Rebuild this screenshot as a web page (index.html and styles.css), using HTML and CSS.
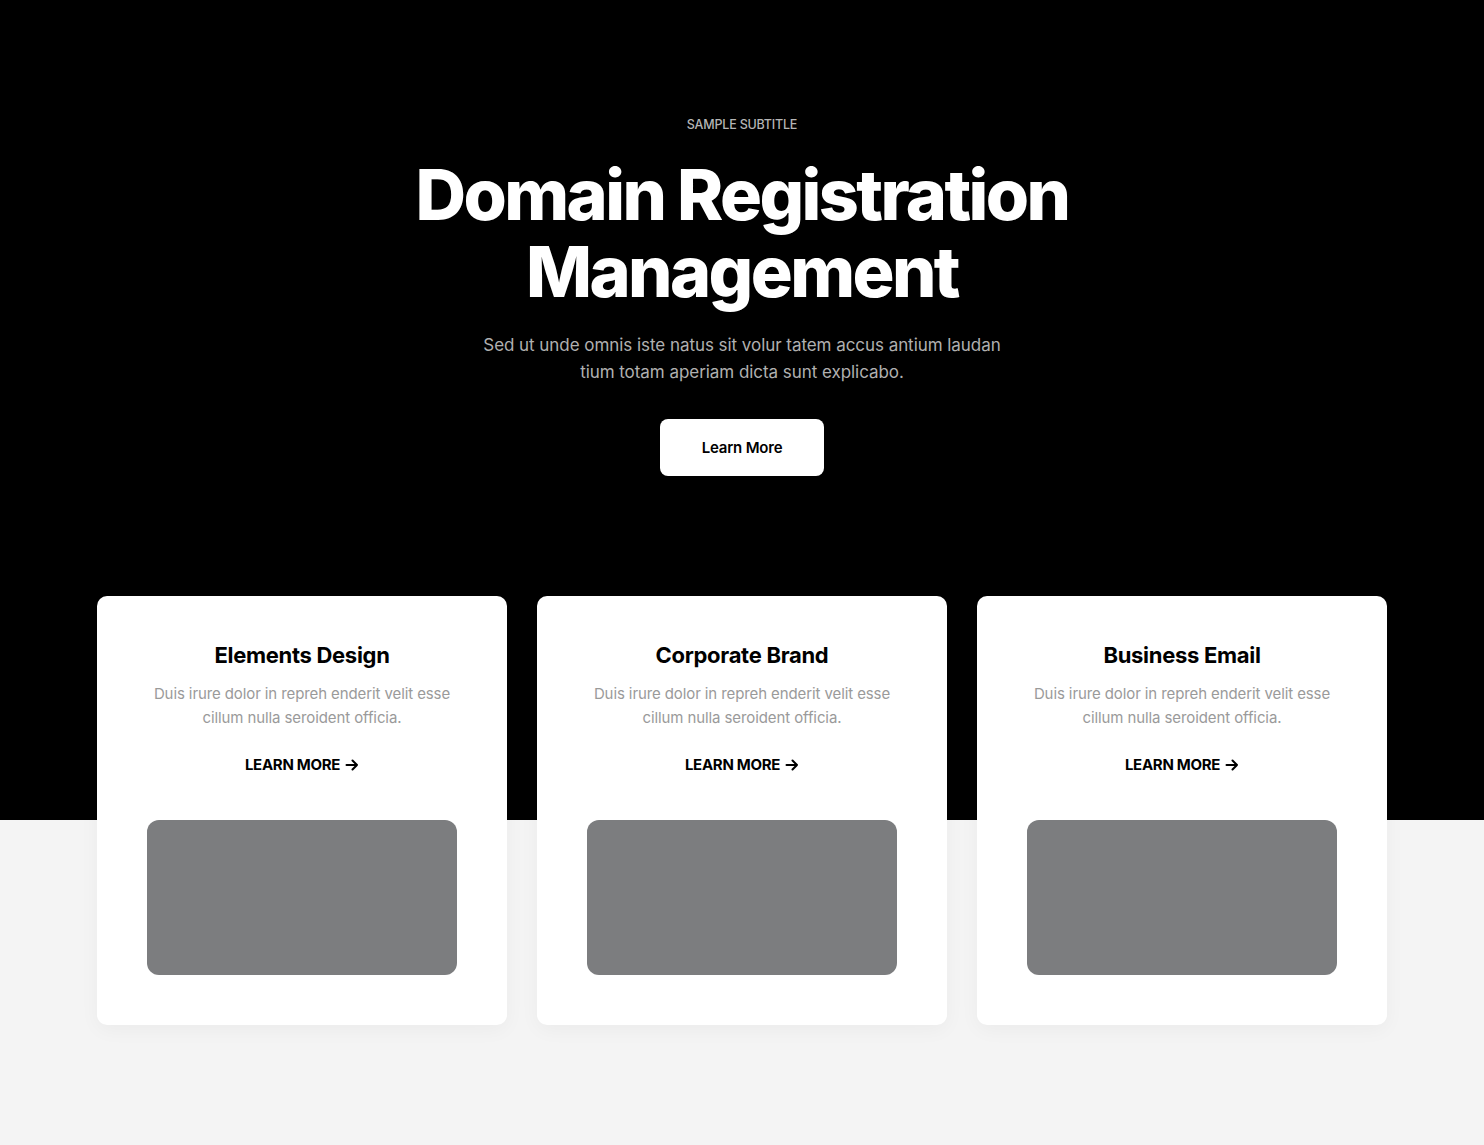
FILE: index.html
```html
<!DOCTYPE html>
<html lang="en">
<head>
<meta charset="utf-8">
<title>Domain Registration Management</title>
<link rel="stylesheet" href="styles.css">
</head>
<body>
<section class="hero">
  <p class="subtitle">SAMPLE SUBTITLE</p>
  <h1 class="headline">Domain Registration<br>Management</h1>
  <p class="lead">Sed ut unde omnis iste natus sit volur tatem accus antium laudan<br>tium totam aperiam dicta sunt explicabo.</p>
  <a class="btn" href="#">Learn More</a>
</section>
<section class="cards">
  <article class="card">
    <h3 class="card-title">Elements Design</h3>
    <p class="card-text">Duis irure dolor in repreh enderit velit esse<br>cillum nulla seroident officia.</p>
    <a class="card-link" href="#">LEARN MORE <svg class="arrow" viewBox="0 0 14 14" width="14" height="14"><path d="M1.5 7h10.5M7.5 2.5L12 7l-4.5 4.5" fill="none" stroke="currentColor" stroke-width="2" stroke-linecap="round" stroke-linejoin="round"/></svg></a>
    <div class="card-img"></div>
  </article>
  <article class="card">
    <h3 class="card-title">Corporate Brand</h3>
    <p class="card-text">Duis irure dolor in repreh enderit velit esse<br>cillum nulla seroident officia.</p>
    <a class="card-link" href="#">LEARN MORE <svg class="arrow" viewBox="0 0 14 14" width="14" height="14"><path d="M1.5 7h10.5M7.5 2.5L12 7l-4.5 4.5" fill="none" stroke="currentColor" stroke-width="2" stroke-linecap="round" stroke-linejoin="round"/></svg></a>
    <div class="card-img"></div>
  </article>
  <article class="card">
    <h3 class="card-title">Business Email</h3>
    <p class="card-text">Duis irure dolor in repreh enderit velit esse<br>cillum nulla seroident officia.</p>
    <a class="card-link" href="#">LEARN MORE <svg class="arrow" viewBox="0 0 14 14" width="14" height="14"><path d="M1.5 7h10.5M7.5 2.5L12 7l-4.5 4.5" fill="none" stroke="currentColor" stroke-width="2" stroke-linecap="round" stroke-linejoin="round"/></svg></a>
    <div class="card-img"></div>
  </article>
</section>
</body>
</html>
```

FILE: styles.css
```css
html, body {
  margin: 0;
  padding: 0;
}
body {
  min-height: 1145px;
  font-family: "Inter", "Liberation Sans", sans-serif;
  background: linear-gradient(to bottom, #000 0, #000 820px, #f4f4f4 820px, #f4f4f4 100%);
  color: #000;
}
.hero {
  display: flex;
  flex-direction: column;
  align-items: center;
  text-align: center;
  padding-top: 117px;
}
.subtitle {
  margin: 0;
  font-size: 12.5px;
  line-height: 16px;
  color: #b5b5b5;
  font-weight: 500;
  letter-spacing: -0.2px;
}
.headline {
  margin: 23px 0 0;
  color: #fff;
  font-size: 70px;
  line-height: 77px;
  font-weight: 800;
  letter-spacing: -2.6px;
}
.lead {
  margin: 22px 0 0;
  color: #b0b0b0;
  font-size: 17px;
  line-height: 27px;
  font-weight: 400;
  letter-spacing: -0.05px;
}
.btn {
  margin-top: 33px;
  display: flex;
  align-items: center;
  justify-content: center;
  width: 164px;
  height: 57px;
  background: #fff;
  color: #000;
  border-radius: 8px;
  text-decoration: none;
  font-size: 15px;
  font-weight: 600;
  letter-spacing: -0.2px;
}
.cards {
  display: grid;
  grid-template-columns: repeat(3, 410px);
  gap: 30px;
  justify-content: center;
  margin-top: 120px;
}
.card {
  background: #fff;
  border-radius: 10px;
  box-shadow: 0 5px 20px rgba(0, 0, 0, 0.04);
  padding: 44px 50px 50px;
  display: flex;
  flex-direction: column;
  align-items: center;
  text-align: center;
}
.card-title {
  margin: 0;
  font-size: 22px;
  line-height: 30px;
  font-weight: 700;
  letter-spacing: -0.3px;
}
.card-text {
  margin: 12px 0 0;
  font-size: 15px;
  line-height: 24px;
  color: #9a9a9a;
  letter-spacing: -0.1px;
}
.card-link {
  margin-top: 25px;
  display: inline-flex;
  align-items: center;
  gap: 5px;
  font-size: 15px;
  line-height: 20px;
  font-weight: 700;
  color: #000;
  text-decoration: none;
  letter-spacing: -0.3px;
}
.arrow {
  display: block;
}
.card-img {
  margin-top: 45px;
  width: 310px;
  height: 155px;
  background: #7c7d7f;
  border-radius: 12px;
}
```
